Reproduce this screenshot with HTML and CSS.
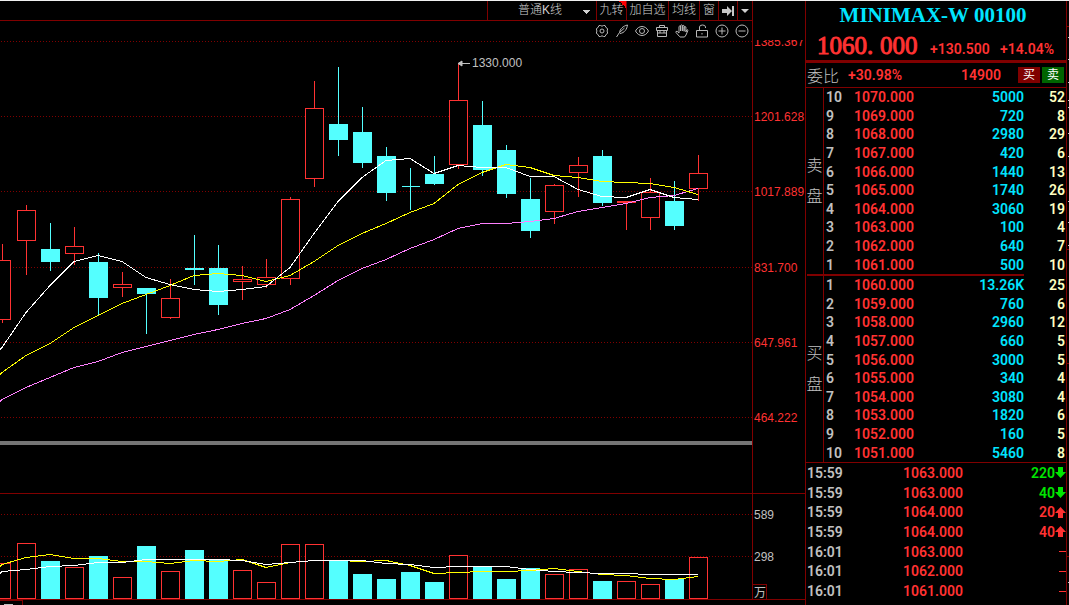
FILE: index.html
```html
<!DOCTYPE html>
<html lang="zh-CN">
<head>
<meta charset="utf-8">
<title>MINIMAX-W 00100</title>
<link rel="stylesheet" href="styles.css">
</head>
<body>
<div class="terminal">
  <main class="main">
    <div class="toolbar">
      <select class="tool period" aria-label="K线类型"><option>普通K线</option></select>
      <button class="tool tool-nine">九转</button>
      <button class="tool tool-add">加自选</button>
      <button class="tool tool-ma">均线</button>
      <button class="tool tool-win">窗</button>
      <button class="tool tool-end" aria-label="最新"><svg width="14" height="12" viewBox="0 0 14 12"><path d="M1 4h5V1l5 5-5 5V8H1zM11 1h2v10h-2z" fill="#c8c8c8"/></svg></button>
      <button class="tool tool-more" aria-label="更多"><svg width="8" height="4" viewBox="0 0 8 4"><path d="M0 0h8L4 4z" fill="#d0d0d0"/></svg></button>
    </div>
    <div class="icons">
      <button class="icon" aria-label="设置"><svg viewBox="0 0 14 14"><path d="M4 1.5h1.5L7 2.2l1.500-.7H10l1 2 1.500 1V6l-.5 1 .5 1v1.500l-1.500 1-1 2H8.500L7 11.800l-1.500.7H4l-1-2-1.500-1V8L2 7l-.5-1V4.500l1.500-1z"/><circle cx="7" cy="7" r="2"/></svg></button>
      <button class="icon" aria-label="画笔"><svg viewBox="0 0 14 14"><path d="M1.500 13l3-4.500C5 5 8 2 12.500 1 12 5 9.500 9 5 9.500M4.500 8.500L9.500 4"/></svg></button>
      <button class="icon" aria-label="显示"><svg viewBox="0 0 14 14"><path d="M.5 7C3.500 1 10.500 1 13.500 7 10.500 13 3.500 13 .5 7z"/><circle cx="7" cy="7" r="2.500"/></svg></button>
      <button class="icon" aria-label="工具箱"><svg viewBox="0 0 14 14"><path d="M1.500 3.500h11v3h-11zM2.500 6.500v6h9v-6M4.500 3.500v-2h5v2M5 6.500v2.500M9 6.500v2.500M2.500 9h9"/></svg></button>
      <button class="icon" aria-label="拖动"><svg viewBox="0 0 14 14"><path d="M4.500 12.500L1 8.500 1 7.500l1.200-.2L4 9V2.500q.8-1 1.500 0V7 1.500q.9-1.200 1.800 0V7 1.800q.9-1 1.800 0V7.300 3q.9-1 1.800 0V8l.8-2q1-.6 1.300.2L11 11l-1.500 2H5z"/></svg></button>
      <button class="icon" aria-label="解锁"><svg viewBox="0 0 14 14"><path d="M1.500 6.500h11v6.500h-11zM4.500 6.500V3q0-2 3-2t3 2v1M7 9v1.500"/></svg></button>
      <button class="icon" aria-label="放大"><svg viewBox="0 0 14 14"><circle cx="7" cy="7" r="6"/><path d="M3.500 7h7M7 3.500v7"/></svg></button>
      <button class="icon" aria-label="缩小"><svg viewBox="0 0 14 14"><circle cx="7" cy="7" r="6"/><path d="M3.500 7h7"/></svg></button>
    </div>
    <svg class="chart" id="chart" viewBox="0 40 805 565" role="img" aria-label="K线图"></svg>
  </main>
  <aside class="quote">
    <h1 class="name">MINIMAX-W 00100</h1>
    <div class="last">
      <span class="price">1060<span class="dot">.</span>000</span>
      <span class="change">+130.500</span>
      <span class="percent">+14.04%</span>
    </div>
    <div class="ratio">
      <span class="ratio-label">委比</span>
      <span class="ratio-value">+30.98%</span>
      <span class="ratio-diff">14900</span>
      <button class="badge buy">买</button>
      <button class="badge sell">卖</button>
    </div>
    <section class="book">
      <div class="side"><span>卖</span><span>盘</span></div>
      <table class="levels" id="asks"></table>
    </section>
    <div class="mid"></div>
    <section class="book bids">
      <div class="side"><span>买</span><span>盘</span></div>
      <table class="levels" id="bids"></table>
    </section>
    <table class="trades" id="trades"></table>
  </aside>
  <svg class="edge" width="2" height="605" viewBox="0 0 2 605" aria-hidden="true"><path d="M0 25.500h2M0 248.500h2M0 362.500h2M0 555.500h2" stroke="#800000"/><path d="M1 36.500h1M1 58.500h1M1 81.500h1M1 99.500h1M1 106.500h1M1 132.500h1M1 155.500h1M1 200.500h1M1 221.500h1M1 244.500h1M1 581.500h1" stroke="#c8c8c8"/></svg>
</div>
<script src="app.js"></script>
</body>
</html>
```
FILE: styles.css
```css
* { box-sizing: border-box; }

body {
  margin: 0;
  background: #000;
  color: #c0c0c0;
  font-family: "Liberation Sans", "Noto Sans CJK SC", sans-serif;
  overflow: hidden;
}

.terminal {
  display: grid;
  grid-template-columns: minmax(0, 1fr) 262px 2px;
  border-top: 1px solid #f0f0f0;
}

button, select {
  margin: 0;
  padding: 0;
  border: 0;
  background: none;
  color: inherit;
  font: inherit;
}

.toolbar {
  display: flex;
  justify-content: flex-end;
  height: 20px;
  margin-right: 52px;
  border-right: 1px solid #800000;
  border-bottom: 1px solid #800000;
}

.tool {
  display: flex;
  align-items: center;
  justify-content: center;
  border-left: 1px solid #800000;
  font-size: 12px;
  font-weight: 300;
  line-height: 19px;
  color: #d0d0d0;
}

.period {
  appearance: none;
  width: 109px;
  padding-left: 30px;
  background: linear-gradient(#d0d0d0, #d0d0d0) no-repeat;
  background: conic-gradient(from -45deg at 50% 100%, #d0d0d0 90deg, transparent 0) 95px 9px / 8px 4px no-repeat;
  background: conic-gradient(from 135deg at 50% 100%, transparent 0) no-repeat,
    linear-gradient(to bottom right, #d0d0d0 50%, transparent 50%) 99px 9px / 4px 4px no-repeat,
    linear-gradient(to bottom left, #d0d0d0 50%, transparent 50%) 95px 9px / 4px 4px no-repeat;
}

.tool-nine {
  width: 30px;
  background: linear-gradient(to bottom left, #f00 50%, transparent 50%) top right / 7px 7px no-repeat;
}
.tool-add { width: 42px; }
.tool-ma { width: 31px; }
.tool-win { width: 19px; }
.tool-end { width: 19px; }
.tool-more { width: 15px; }

.icons {
  display: flex;
  justify-content: flex-end;
  align-items: center;
  gap: 6px;
  height: 19px;
  margin-right: 52px;
  padding-right: 3px;
  border-right: 1px solid #800000;
}

.icon { display: flex; width: 14px; height: 14px; }
.icon svg { width: 14px; height: 14px; fill: none; stroke: #b8b8b8; }

.chart { display: block; width: 100%; height: auto; font-size: 12px; }
.rule { stroke: #800000; fill: none; shape-rendering: crispEdges; }
.dots { stroke: #800000; stroke-dasharray: 1 2; shape-rendering: crispEdges; }
.up { fill: #000; stroke: #ff3232; shape-rendering: crispEdges; }
.down { fill: #54ffff; stroke: #54ffff; shape-rendering: crispEdges; }
.line { fill: none; shape-rendering: crispEdges; }
.axis-price { fill: #ff3232; }
.axis-volume { fill: #c0c0c0; }

.quote {
  border-left: 1px solid #800000;
  border-right: 1px solid #800000;
  font-family: Roboto, "Liberation Sans", "Noto Sans CJK SC", sans-serif;
  font-size: 14px;
  font-weight: 600;
}

.name {
  margin: 0;
  padding-right: 6px;
  font: bold 21px/28px "Liberation Serif", serif;
  color: #00e5ff;
  text-align: center;
}

.last {
  display: flex;
  align-items: baseline;
  height: 34px;
  padding-left: 11px;
  border-bottom: 3px solid #800000;
  color: #ff3232;
  line-height: 34px;
}
.price { width: 113px; font: 25px/34px "Liberation Serif", serif; -webkit-text-stroke: 1px #ff3232; }
.dot { display: inline-block; width: 13px; }
.change { width: 70px; }

.ratio {
  display: flex;
  align-items: center;
  height: 25px;
  padding: 0 2px 0 1px;
  border-bottom: 1px solid #800000;
  color: #ff3232;
}
.ratio-label { width: 41px; font-size: 16px; font-weight: 300; color: #c0c0c0; }
.ratio-value { flex: 1; }
.ratio-diff { margin-right: 17px; }
.badge {
  width: 22px;
  height: 16px;
  margin-left: 2px;
  color: #fff;
  font-size: 12px;
  line-height: 16px;
  font-weight: 400;
}
.ratio-diff + .badge { margin-left: 0; }
.buy { background: #800000; }
.sell { background: #006400; }

.book { display: flex; }
.side {
  display: flex;
  flex-direction: column;
  align-items: center;
  justify-content: center;
  gap: 15px;
  width: 18px;
  border-right: 1px solid #800000;
  font-size: 16px;
  line-height: 16px;
  font-weight: 300;
}

table { border-collapse: collapse; }
td { padding: 0; line-height: 16px; }

.levels { flex: 1; height: 186px; }
.level { width: 30px; padding-left: 2px; }
.cost { color: #ff3232; }
.size { color: #00e5ff; text-align: right; }
.count { width: 42px; padding-right: 1px; color: #ffffc0; text-align: right; }

.mid { height: 2px; margin: 0 42px 0 1px; background: #800000; }
.bids { border-bottom: 1px solid #800000; }

.trades { width: 100%; height: 138px; }
.time { width: 97px; padding-left: 1px; }
.volume { text-align: right; }
.mark { width: 11px; }
.mark svg { display: block; width: 11px; height: 11px; }
.rise { color: #ff3232; fill: #ff3232; }
.fall { color: #00e600; fill: #00e600; }

.edge { display: block; }
```
FILE: app.js
```js
// Candles: [direction, high, body top, body bottom, low, volume top]
const candles = [
  [1,244,260,320,323,563],[1,205,210,241,275,543],[0,223,249,262,271,561],[1,227,246,254,265,567],
  [0,253,262,298,315,556],[1,272,284,288,297,577],[0,288,288,294,334,546],[1,279,298,318,319,571],
  [0,235,268,270,285,550],[0,245,268,305,315,560],[1,266,279,282,300,570],[1,259,277,285,288,582],
  [1,197,199,279,285,544],[1,81,108,179,187,544],[0,67,124,140,156,560],[0,107,132,163,168,574],
  [0,147,156,193,201,579],[0,168,186,187,210,572],[0,156,174,184,185,582],[1,64,100,165,169,555],
  [0,101,125,170,176,566],[0,145,150,194,198,579],[0,178,199,231,238,568],[1,184,185,212,224,574],
  [1,157,165,173,197,569],[0,150,156,203,206,581],[1,201,201,203,230,581],[1,178,192,218,230,584],
  [0,181,201,226,230,579],[1,155,173,189,201,557]
];
const averages = {
  '#ffffff': [347,312,285,261,255,261,277,284,289,291,289,286,267,233,201,177,160,158,173,165,167,167,176,176,189,196,197,189,197,199],
  '#ffff00': [372,355,343,327,315,303,294,285,275,273,275,281,275,261,245,233,223,212,203,184,172,164,167,175,177,181,182,183,187,194],
  '#ff80ff': [399,387,377,367,361,352,346,340,334,329,323,318,309,295,280,268,259,248,239,228,223,223,221,218,211,207,203,197,195,188]
};
const volumeAverages = {
  '#ffff00': [564,557,554,558,558,561,561,563,560,561,559,567,562,560,560,561,560,565,573,572,571,571,570,568,571,574,575,578,579,576],
  '#ffffff': [571,569,566,565,562,562,559,559,559,559,560,564,562,560,560,560,563,564,567,566,566,566,569,571,572,573,573,574,574,574]
};
const center = i => 2 + 24 * i;
const out = [];

for (const y of [41, 116, 191, 267, 342, 417, 514, 556]) out.push(`<path class="dots" d="M1 ${y}.5H752"/>`);
out.push('<rect y="441" width="752" height="4" fill="#757575"/>');

candles.forEach(([up, high, top, bottom, low, volume], i) => {
  const c = center(i), kind = up ? 'up' : 'down';
  out.push(`<path class="${kind}" d="M${c}.5 ${high}V${top}M${c}.5 ${bottom}V${low}"/>`);
  out.push(`<path class="${kind}" d="M${c - 9}.5 ${top}.5h18V${bottom - 1}.5h-18z"/>`);
  out.push(`<path class="${kind}" d="M${c - 9}.5 ${volume}.5h18V598.5h-18z"/>`);
});

const draw = set => {
  for (const [color, ys] of Object.entries(set)) {
    const start = 2 * ys[0] - ys[1] > ys[0] ? ys[0] + 2 : ys[0];
    out.push(`<path class="line" stroke="${color}" d="M0 ${start}.5 ${ys.map((y, i) => `L${center(i)} ${y}.5`).join(' ')}"/>`);
  }
};
draw({ '#ff80ff': averages['#ff80ff'], '#ffff00': averages['#ffff00'], '#ffffff': averages['#ffffff'] });
draw(volumeAverages);

out.push('<path class="rule" d="M752.5 40V600M0 493.5H805M0 599.500H805M0 600.5H22.500V605M753 584.500H766.500V599"/>');
out.push('<path d="M4 604h9v1H4z" fill="#c0c0c0"/>');
out.push('<path d="M458 63.500h12M462 61l-4 2.500 4 2.500z" stroke="#c0c0c0" fill="#c0c0c0"/>');
out.push('<text x="472" y="67" fill="#c0c0c0">1330.000</text>');
[['1385.367', 46], ['1201.628', 121], ['1017.889', 196], ['831.700', 272], ['647.961', 347], ['464.222', 422]]
  .forEach(([label, y]) => out.push(`<text class="axis-price" x="754" y="${y}">${label}</text>`));
out.push('<text class="axis-volume" x="754" y="519">589</text><text class="axis-volume" x="754" y="561">298</text>');
out.push('<text class="axis-volume" x="754" y="597">万</text>');
document.getElementById('chart').innerHTML = out.join('');

const asks = [['5000', 52], ['720', 8], ['2980', 29], ['420', 6], ['1440', 13], ['1740', 26], ['3060', 19], ['100', 4], ['640', 7], ['500', 10]];
const bids = [['13.26K', 25], ['760', 6], ['2960', 12], ['660', 5], ['3000', 5], ['340', 4], ['3080', 4], ['1820', 6], ['160', 5], ['5460', 8]];
const row = (level, price, [size, count]) =>
  `<tr><td class="level">${level}</td><td class="cost">${price}.000</td><td class="size">${size}</td><td class="count">${count}</td></tr>`;
document.getElementById('asks').innerHTML = asks.map((a, i) => row(10 - i, 1070 - i, a)).join('');
document.getElementById('bids').innerHTML = bids.map((b, i) => row(i + 1, 1060 - i, b)).join('');

const marks = {
  fall: '<path d="M3 0h5v5h3L5.500 11 0 5h3z"/>',
  rise: '<path d="M3 11h5V6h3L5.500 0 0 6h3z"/>',
  flat: '<path d="M4 5h7v1H4z" fill="#ff3232"/>'
};
const trades = [['15:59', 1063, 220, 'fall'], ['15:59', 1063, 40, 'fall'], ['15:59', 1064, 20, 'rise'], ['15:59', 1064, 40, 'rise'],
  ['16:01', 1063, '', 'flat'], ['16:01', 1062, '', 'flat'], ['16:01', 1061, '', 'flat']];
document.getElementById('trades').innerHTML = trades.map(([time, price, volume, kind]) =>
  `<tr><td class="time">${time}</td><td class="cost">${price}.000</td><td class="volume ${kind}">${volume}</td>` +
  `<td class="mark ${kind}"><svg viewBox="0 0 11 11">${marks[kind]}</svg></td></tr>`).join('');
```
